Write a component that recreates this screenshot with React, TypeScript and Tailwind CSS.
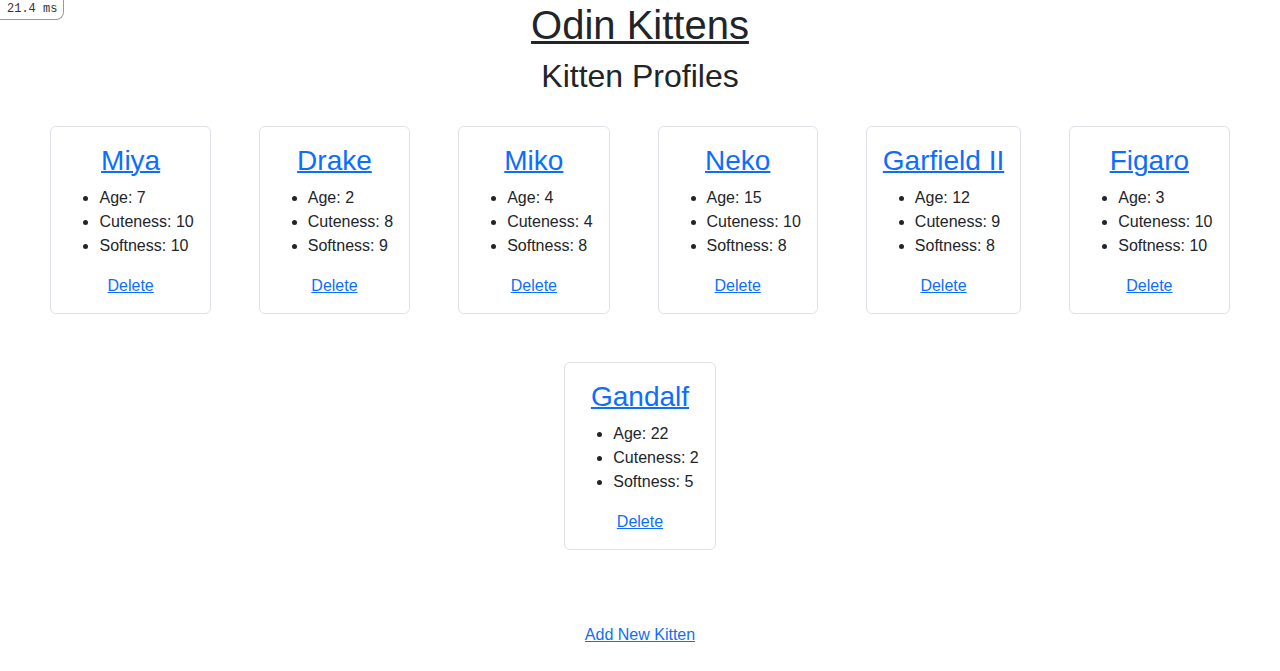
import React from 'react'

type Kitten = {
  name: string
  age: number
  cuteness: number
  softness: number
}

const kittens: Kitten[] = [
  { name: 'Miya', age: 7, cuteness: 10, softness: 10 },
  { name: 'Drake', age: 2, cuteness: 8, softness: 9 },
  { name: 'Miko', age: 4, cuteness: 4, softness: 8 },
  { name: 'Neko', age: 15, cuteness: 10, softness: 8 },
  { name: 'Garfield II', age: 12, cuteness: 9, softness: 8 },
  { name: 'Figaro', age: 3, cuteness: 10, softness: 10 },
  { name: 'Gandalf', age: 22, cuteness: 2, softness: 5 },
]

const KittenCard = ({ kitten }: { kitten: Kitten }) => {
  return (
    <div className="m-6 rounded-md border border-[#dee2e6] bg-white px-4 pt-[17px] pb-[15px] text-center">
      <h3 className="mb-2 text-[28px] leading-[1.2]">
        <a className="text-[#0d6efd] underline decoration-2" href="#">{kitten.name}</a>
      </h3>
      <ul className="mb-4 list-disc pl-8 text-left text-base leading-6">
        <li>Age: {kitten.age}</li>
        <li>Cuteness: {kitten.cuteness}</li>
        <li>Softness: {kitten.softness}</li>
      </ul>
      <a className="text-base leading-6 text-[#0d6efd] underline" href="#">Delete</a>
    </div>
  )
}

const App = () => {
  return (
    <div className="relative min-h-screen bg-white text-[#212529] font-['Liberation_Sans',Arial,sans-serif]">
      <div className="absolute left-0 top-0 h-5 rounded-br-lg border-b border-r border-[#999] bg-white pl-[7px] pr-[6px] font-['Liberation_Mono',monospace] text-[12px] leading-[19px] text-[#333]">
        21.4 ms
      </div>

      <div className="pt-px text-center">
        <h1 className="mb-2 text-[40px] leading-[1.2]">
          <a className="text-[#212529] underline decoration-[3px]" href="#">Odin Kittens</a>
        </h1>
        <h2 className="mb-[7px] text-[32px] leading-[1.2]">Kitten Profiles</h2>
      </div>

      <div className="flex flex-wrap justify-center">
        {kittens.map((k) => (
          <KittenCard key={k.name} kitten={k} />
        ))}
      </div>

      <div className="mt-12 pt-px text-center">
        <a className="text-base leading-6 text-[#0d6efd] underline" href="#">Add New Kitten</a>
      </div>
    </div>
  )
}

export default App
